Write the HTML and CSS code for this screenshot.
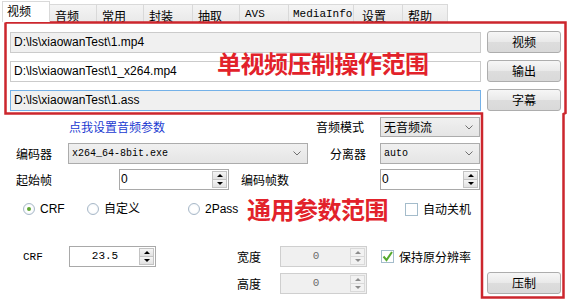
FILE: index.html
```html
<!DOCTYPE html>
<html lang="zh-CN">
<head>
  <meta charset="UTF-8">
  <meta name="viewport" content="width=device-width, initial-scale=1.0">
  <title>视频压制</title>
  <link rel="stylesheet" href="styles.css">
</head>
<body>
  <div class="window">
    <div class="tabs">
      <div class="tab active">视频</div>
      <div class="tab">音频</div>
      <div class="tab">常用</div>
      <div class="tab">封装</div>
      <div class="tab">抽取</div>
      <div class="tab mono">AVS</div>
      <div class="tab mono">MediaInfo</div>
      <div class="tab">设置</div>
      <div class="tab">帮助</div>
    </div>

    <div class="files">
      <div class="textbox readonly">D:\ls\xiaowanTest\1.mp4</div>
      <div class="btn">视频</div>
      <div class="textbox">D:\ls\xiaowanTest\1_x264.mp4</div>
      <div class="btn">输出</div>
      <div class="textbox readonly focused">D:\ls\xiaowanTest\1.ass</div>
      <div class="btn">字幕</div>
    </div>

    <div class="lower">
      <div class="form">
        <div class="row row-a">
          <a class="link">点我设置音频参数</a>
          <span class="label label-mode">音频模式</span>
          <div class="combo combo-small">
            <span>无音频流</span>
            <svg class="chev" width="8" height="5" viewBox="0 0 8 5"><polyline points="0.5,0.5 4,4 7.5,0.5"/></svg>
          </div>
        </div>

        <div class="row row-b">
          <span class="label label-enc">编码器</span>
          <div class="combo combo-wide">
            <span class="mono">x264_64-8bit.exe</span>
            <svg class="chev" width="8" height="5" viewBox="0 0 8 5"><polyline points="0.5,0.5 4,4 7.5,0.5"/></svg>
          </div>
          <span class="label label-demux">分离器</span>
          <div class="combo combo-small">
            <span class="mono">auto</span>
            <svg class="chev" width="8" height="5" viewBox="0 0 8 5"><polyline points="0.5,0.5 4,4 7.5,0.5"/></svg>
          </div>
        </div>

        <div class="row row-c">
          <span class="label label-start">起始帧</span>
          <div class="num num-start">
            <span class="num-val">0</span>
            <span class="spin"><i class="up"></i><i class="down"></i></span>
          </div>
          <span class="label label-count">编码帧数</span>
          <div class="num num-count">
            <span class="num-val">0</span>
            <span class="spin"><i class="up"></i><i class="down"></i></span>
          </div>
        </div>

        <div class="row row-d">
          <label class="radio checked r-crf"><span class="dot"></span>CRF</label>
          <label class="radio r-custom"><span class="dot"></span>自定义</label>
          <label class="radio r-2pass"><span class="dot"></span>2Pass</label>
          <label class="check"><span class="box"></span>自动关机</label>
        </div>

        <div class="row row-e">
          <span class="label label-crf mono">CRF</span>
          <div class="num num-crf">
            <span class="num-val center mono">23.5</span>
            <span class="spin"><i class="up"></i><i class="down"></i></span>
          </div>
          <span class="label label-size">宽度</span>
          <div class="num num-size disabled">
            <span class="num-val center mono">0</span>
            <span class="spin"><i class="up"></i><i class="down"></i></span>
          </div>
          <label class="check checked keep">
            <span class="box">
              <svg width="13" height="13" viewBox="0 0 13 13"><polyline points="2.5,6.5 5.5,10 11,2"/></svg>
            </span>保持原分辨率
          </label>
        </div>

        <div class="row row-f">
          <span class="label label-size">高度</span>
          <div class="num num-size disabled">
            <span class="num-val center mono">0</span>
            <span class="spin"><i class="up"></i><i class="down"></i></span>
          </div>
        </div>
      </div>

      <div class="side">
        <div class="btn">压制</div>
      </div>
    </div>

    <!-- 标注 -->
    <svg class="marks" width="573" height="303">
      <polyline points="5.5,22.5 565.5,22.5 565.5,113 563.5,114 563.5,297.5 482,297.5 482,113.5 5.5,113.5 5.5,22.5"/>
    </svg>
    <span class="note note-top">单视频压制操作范围</span>
    <span class="note note-bottom">通用参数范围</span>
  </div>
</body>
</html>
```

FILE: styles.css
```css
body {
  margin: 0;
  background: #fff;
  font-family: "Noto Sans CJK SC", sans-serif;
  font-size: 12px;
  color: #000;
}
.window {
  position: relative;
  width: 573px;
  height: 303px;
  overflow: hidden;
  background: #fff;
}
.mono {
  font-family: "Liberation Mono", monospace;
  font-size: 10px;
}

/* tabs */
.tabs {
  display: flex;
  align-items: flex-end;
  height: 22px;
  padding-left: 2px;
  box-sizing: border-box;
}
.tab {
  height: 18px;
  box-sizing: border-box;
  border: 1px solid #d9d9d9;
  border-bottom: none;
  margin-left: -1px;
  padding: 4px 0 0 5px;
  line-height: 13px;
  background: linear-gradient(#f4f4f4, #e9e9e9);
}
.tab.mono {
  font-size: 11px;
  padding-top: 3px;
}
.tab:nth-child(1) { width: 48px; margin-left: 0; }
.tab:nth-child(2) { width: 48px; }
.tab:nth-child(3) { width: 48px; }
.tab:nth-child(4) { width: 50px; }
.tab:nth-child(5) { width: 48px; }
.tab:nth-child(6) { width: 50px; }
.tab:nth-child(7) { width: 66px; padding-left: 4px; }
.tab:nth-child(8) { width: 50px; padding-left: 8px; }
.tab:nth-child(9) { width: 46px; }
.tab.active {
  position: relative;
  z-index: 1;
  height: 21px;
  padding: 2px 0 0 4px;
  background: #fff;
}

/* file rows */
.files {
  display: grid;
  grid-template-columns: 471px 74px;
  grid-auto-rows: 22px;
  column-gap: 6px;
  row-gap: 7px;
  padding: 9px 0 0 10px;
}
.textbox {
  height: 21px;
  margin-top: 1px;
  box-sizing: border-box;
  border: 1px solid #cbcbcb;
  background: #fff;
  padding-left: 3px;
  font: 12px/19px "Liberation Sans", Arial, sans-serif;
}
.textbox.readonly {
  background: #f0f0f0;
}
.textbox.focused {
  border-color: #74b1e8;
}
.btn {
  height: 22px;
  box-sizing: border-box;
  border: 1px solid #adadad;
  border-radius: 3px;
  background: linear-gradient(#f6f6f6, #e9e9e9 50%, #dddddd 51%, #d9d9d9);
  display: flex;
  align-items: center;
  justify-content: center;
  line-height: 14px;
}

/* lower part */
.lower {
  display: grid;
  grid-template-columns: 481px 74px;
  column-gap: 6px;
  margin-top: 6px;
}
.side {
  display: flex;
  flex-direction: column;
  justify-content: flex-end;
}
.row {
  display: flex;
  align-items: center;
}
.row-a { height: 20px; padding-right: 1px; }
.row-b { height: 21px; margin-top: 6px; padding-right: 1px; }
.row-c { height: 21px; margin-top: 5px; padding-right: 1px; }
.row-d { height: 16px; margin-top: 11px; }
.row-e { height: 21px; margin-top: 29px; }
.row-f { height: 21px; margin-top: 6px; }

.label {
  line-height: 14px;
  white-space: nowrap;
}
.link {
  margin-left: 69px;
  color: #1b3bd1;
  line-height: 14px;
}
.label-mode { margin-left: auto; margin-right: 16px; }
.label-enc { margin-left: 16px; width: 52px; }
.label-demux { margin-left: auto; margin-right: 14px; }
.label-start { margin-left: 16px; width: 103px; }
.label-count { margin-left: 12px; }
.label-crf { margin-left: 23px; width: 46px; font-size: 11px; }
.label-size { margin-left: 237px; width: 43px; }
.row-e .label-size { margin-left: 81px; }

/* combo box */
.combo {
  display: flex;
  align-items: center;
  justify-content: space-between;
  height: 21px;
  box-sizing: border-box;
  border: 1px solid #acacac;
  background: linear-gradient(#f0f0f0, #e5e5e5);
  padding: 0 6px 0 3px;
  line-height: 14px;
}
.row-a .combo { height: 20px; }
.combo-small { width: 100px; margin-left: 0; }
.combo-wide { width: 240px; }
.chev polyline {
  fill: none;
  stroke: #707070;
  stroke-width: 1;
}

/* numeric up-down */
.num {
  display: flex;
  height: 21px;
  box-sizing: border-box;
  border: 1px solid #a9a9a9;
  background: #fff;
}
.num-start { width: 110px; }
.num-count { width: 100px; margin-left: auto; }
.num-crf, .num-size { width: 87px; }
.num-val {
  flex: 1;
  padding-left: 1px;
  font: 12px/19px "Liberation Sans", Arial, sans-serif;
}
.num-val.center {
  text-align: center;
  font-family: "Liberation Mono", monospace;
  font-size: 11px;
}
.spin {
  width: 15px;
  display: flex;
  flex-direction: column;
  padding: 1px 1px 1px 0;
}
.spin i {
  flex: 1;
  display: flex;
  align-items: center;
  justify-content: center;
  border: 1px solid #c3c3c3;
  background: linear-gradient(#f5f5f5, #e2e2e2);
}
.spin i + i { margin-top: -1px; }
.spin i::after {
  content: "";
  border-left: 3px solid transparent;
  border-right: 3px solid transparent;
}
.spin .up::after { border-bottom: 3px solid #000; }
.spin .down::after { border-top: 3px solid #000; }
.num.disabled {
  border-color: #cfcfcf;
  background: #f0f0f0;
  color: #6d6d6d;
}
.num.disabled .spin i {
  border-color: #d9d9d9;
  background: #f2f2f2;
}
.num.disabled .up::after { border-bottom-color: #8c8c8c; }
.num.disabled .down::after { border-top-color: #8c8c8c; }

/* radios and checks */
.radio, .check {
  display: flex;
  align-items: center;
  gap: 5px;
  line-height: 14px;
}
.radio {
  font-family: "Liberation Sans", "Noto Sans CJK SC", sans-serif;
}
.r-crf { margin-left: 23px; width: 64px; }
.r-custom { width: 101px; }
.r-2pass { width: 217px; }
.dot {
  position: relative;
  width: 12px;
  height: 12px;
  box-sizing: border-box;
  border: 1px solid #a8b8c8;
  border-radius: 50%;
  background: radial-gradient(circle, #fff 45%, #e6edf3);
}
.radio.checked .dot::after {
  content: "";
  position: absolute;
  left: 3px;
  top: 3px;
  width: 4px;
  height: 4px;
  border-radius: 50%;
  background: #5fa532;
}
.box {
  display: block;
  width: 13px;
  height: 13px;
  box-sizing: border-box;
  border: 1px solid #a4bccb;
  background: #fff;
}
.box svg {
  display: block;
  margin: -1px;
}
.box polyline {
  fill: none;
  stroke: #55a92e;
  stroke-width: 2;
}
.keep { margin-left: 14px; }

/* annotation overlay */
.marks {
  position: absolute;
  left: 0;
  top: 0;
  pointer-events: none;
}
.marks polyline {
  fill: none;
  stroke: #cc262d;
  stroke-width: 2.5;
}
.note {
  position: absolute;
  font-family: "Noto Sans CJK SC", sans-serif;
  font-weight: 700;
  font-size: 24px;
  line-height: 24px;
  color: #e2222a;
  white-space: nowrap;
  letter-spacing: -0.5px;
}
.note-top { left: 217px; top: 51px; }
.note-bottom { left: 247px; top: 197px; }
```
